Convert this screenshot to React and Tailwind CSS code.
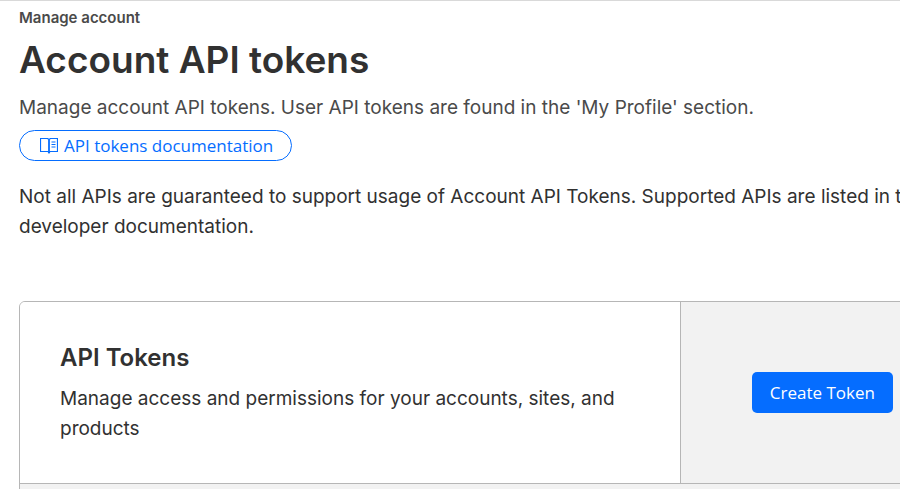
function BookIcon() {
  return (
    <svg className="h-4 w-[18px] shrink-0" viewBox="0 0 18 16" fill="none" stroke="currentColor" aria-hidden="true">
      <path d="M8.500 13.500h-8V.500h7l1.500 1 1.500-1h7v13H10l-1 1.500-1-1.500" strokeWidth="1.2" />
      <path d="M9 1.500V15" strokeWidth="1.8" />
      <path d="M11.500 4h4M11.500 6.500h4M11.500 9h4" strokeWidth="1.2" />
    </svg>
  );
}

function PageHeader() {
  return (
    <header>
      <p className="text-[15px] leading-5 font-semibold text-[#4a4a4a]">Manage account</p>
      <h1 className="mt-2 text-[37px] leading-[48px] font-semibold text-[#313131]">Account API tokens</h1>
      <p className="mt-[9px] text-[19px] leading-[30px] text-[#4a4a4a]">
        Manage account API tokens. User API tokens are found in the 'My Profile' section.
      </p>
      <a
        href="#docs"
        className="mt-[7px] flex h-[31px] w-fit items-center gap-1.5 rounded-full border border-[#056dff] pr-[18px] pl-5 font-['Open_Sans',sans-serif] text-[17px] text-[#056dff]"
      >
        <BookIcon />
        API tokens documentation
      </a>
    </header>
  );
}

function TokensCard() {
  return (
    <section className="mt-[59px] overflow-hidden rounded-md border border-[#b6b6b6] bg-[#f2f2f2]">
      <div className="grid grid-cols-[7fr_3fr] border-b border-[#b6b6b6]">
        <div className="border-r border-[#b6b6b6] bg-white px-10 pt-[41px] pb-[39px]">
          <h2 className="text-2xl leading-[30px] font-semibold text-[#313131]">API Tokens</h2>
          <p className="mt-[11px] text-[19px] leading-[30px]">
            Manage access and permissions for your accounts, sites, and products
          </p>
        </div>
        <div className="flex items-center justify-center">
          <button
            type="button"
            className="h-[41px] rounded-[5px] bg-[#056dff] px-[18px] font-['Open_Sans',sans-serif] text-[17px] text-white"
          >
            Create Token
          </button>
        </div>
      </div>
      <div className="h-20" />
    </section>
  );
}

export default function App() {
  return (
    <div className="h-screen overflow-hidden border-t border-[#d9d9d9] bg-white font-[Inter,sans-serif] text-[#313131]">
      <main className="min-w-[984px] px-[19px] pt-[7px]">
        <PageHeader />
        <p className="mt-[21px] text-[19px] leading-[30px]">
          Not all APIs are guaranteed to support usage of Account API Tokens. Supported APIs are listed in the{' '}
          <br />
          developer documentation.
        </p>
        <TokensCard />
      </main>
    </div>
  );
}
